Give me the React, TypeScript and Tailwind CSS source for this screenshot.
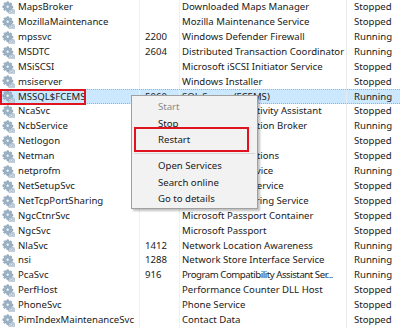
const rows: [string, string, string, string][] = [
  ["MapsBroker", "", "Downloaded Maps Manager", "Stopped"],
  ["MozillaMaintenance", "", "Mozilla Maintenance Service", "Stopped"],
  ["mpssvc", "2200", "Windows Defender Firewall", "Running"],
  ["MSDTC", "2604", "Distributed Transaction Coordinator", "Running"],
  ["MSiSCSI", "", "Microsoft iSCSI Initiator Service", "Stopped"],
  ["msiserver", "", "Windows Installer", "Stopped"],
  ["MSSQL$FCEMS", "5060", "SQL Server (FCEMS)", "Running"],
  ["NcaSvc", "", "Network Connectivity Assistant", "Stopped"],
  ["NcbService", "1040", "Network Connection Broker", "Running"],
  ["Netlogon", "", "Netlogon", "Stopped"],
  ["Netman", "", "Network Connections", "Stopped"],
  ["netprofm", "1288", "Network List Service", "Running"],
  ["NetSetupSvc", "", "Network Setup Service", "Stopped"],
  ["NetTcpPortSharing", "", "Net.Tcp Port Sharing Service", "Stopped"],
  ["NgcCtnrSvc", "", "Microsoft Passport Container", "Stopped"],
  ["NgcSvc", "", "Microsoft Passport", "Stopped"],
  ["NlaSvc", "1412", "Network Location Awareness", "Running"],
  ["nsi", "1288", "Network Store Interface Service", "Running"],
  ["PcaSvc", "916", "Program Compatibility Assistant Ser...", "Running"],
  ["PerfHost", "", "Performance Counter DLL Host", "Stopped"],
  ["PhoneSvc", "", "Phone Service", "Stopped"],
  ["PimIndexMaintenanceSvc", "", "Contact Data", "Stopped"],
];

const GearIcon = () => (
  <svg width="13" height="13" viewBox="0 0 16 16" className="shrink-0">
    <g fill="#9db4c8" stroke="#6d889f" strokeWidth="0.6">
      <path d="M6 1h2l.3 1.6 1.2.5 1.3-.9 1.4 1.4-.9 1.3.5 1.2 1.6.3v2l-1.6.3-.5 1.2.9 1.3-1.4 1.4-1.3-.9-1.2.5L8 13H6l-.3-1.6-1.2-.5-1.3.9-1.4-1.4.9-1.3-.5-1.2L1 8V6l1.6-.3.5-1.2-.9-1.3 1.4-1.4 1.3.9 1.2-.5z" />
      <circle cx="7" cy="7" r="2" fill="#eef4f9" />
    </g>
    <g fill="#c5d3df" stroke="#7b93a8" strokeWidth="0.5">
      <path d="M11.3 9.5h1.4l.2 1 .8.4.9-.6 1 1-.6.9.4.8 1 .2v1.4l-1 .2-.4.8.6.9-1 1-.9-.6-.8.4-.2 1h-1.4l-.2-1-.8-.4-.9.6-1-1 .6-.9-.4-.8-1-.2v-1.4l1-.2.4-.8-.6-.9 1-1 .9.6.8-.4z" />
      <circle cx="12" cy="13" r="1.2" fill="#eef4f9" />
    </g>
  </svg>
);

export default function App() {
  return (
    <div
      className="relative w-[400px] h-[328px] overflow-hidden bg-white text-[9.6px] text-[#1a1a1a]"
      style={{ fontFamily: '"Noto Sans", "Open Sans", sans-serif' }}
    >
      <div className="flex flex-col">
        {rows.map(([name, pid, desc, status]) => {
          const selected = name === "MSSQL$FCEMS";
          const long = desc.endsWith("...");
          return (
            <div
              key={name}
              className={`flex h-[14.9px] items-center ${
                selected ? "bg-[#cce8ff] border-y border-dotted border-[#99b4cc]" : ""
              }`}
            >
              <div className="relative flex w-[140px] items-center gap-[3px] pl-[2px] h-full border-r border-[#f0f0f0]">
                <GearIcon />
                <span className="whitespace-nowrap">{name}</span>
                {selected && (
                  <div className="absolute left-0 top-[-1px] h-[16px] w-[86px] border-2 border-[#e0141e]" />
                )}
              </div>
              <div className="w-[40px] pl-[5px] h-full flex items-center border-r border-[#f0f0f0]">{pid}</div>
              <div
                className={`w-[167px] pl-[2px] h-full flex items-center whitespace-nowrap overflow-hidden border-r border-[#eaeaea] ${
                  long ? "tracking-[-0.45px]" : ""
                }`}
              >
                {desc}
              </div>
              <div className="pl-[7px]">{status}</div>
            </div>
          );
        })}
      </div>

      <div className="absolute left-[131px] top-[95px] w-[127px] h-[114px] bg-[#f2f2f2] border border-[#a0a0a0] shadow-[2px_2px_2px_rgba(0,0,0,0.25)] flex flex-col pt-[3px]">
        <div className="h-[17px] flex items-center pl-[26px] text-[#8a8a8a]">Start</div>
        <div className="h-[17px] flex items-center pl-[26px]">Stop</div>
        <div className="relative h-[17px] flex items-center pl-[26px]">
          Restart
          <div className="absolute left-[2px] top-[-5px] w-[115px] h-[25px] border-2 border-[#e0141e]" />
        </div>
        <div className="mx-[2px] my-[4px] h-px bg-[#d7d7d7]" />
        <div className="h-[17px] flex items-center pl-[26px]">Open Services</div>
        <div className="h-[17px] flex items-center pl-[26px]">Search online</div>
        <div className="h-[17px] flex items-center pl-[26px]">Go to details</div>
      </div>
    </div>
  );
}
